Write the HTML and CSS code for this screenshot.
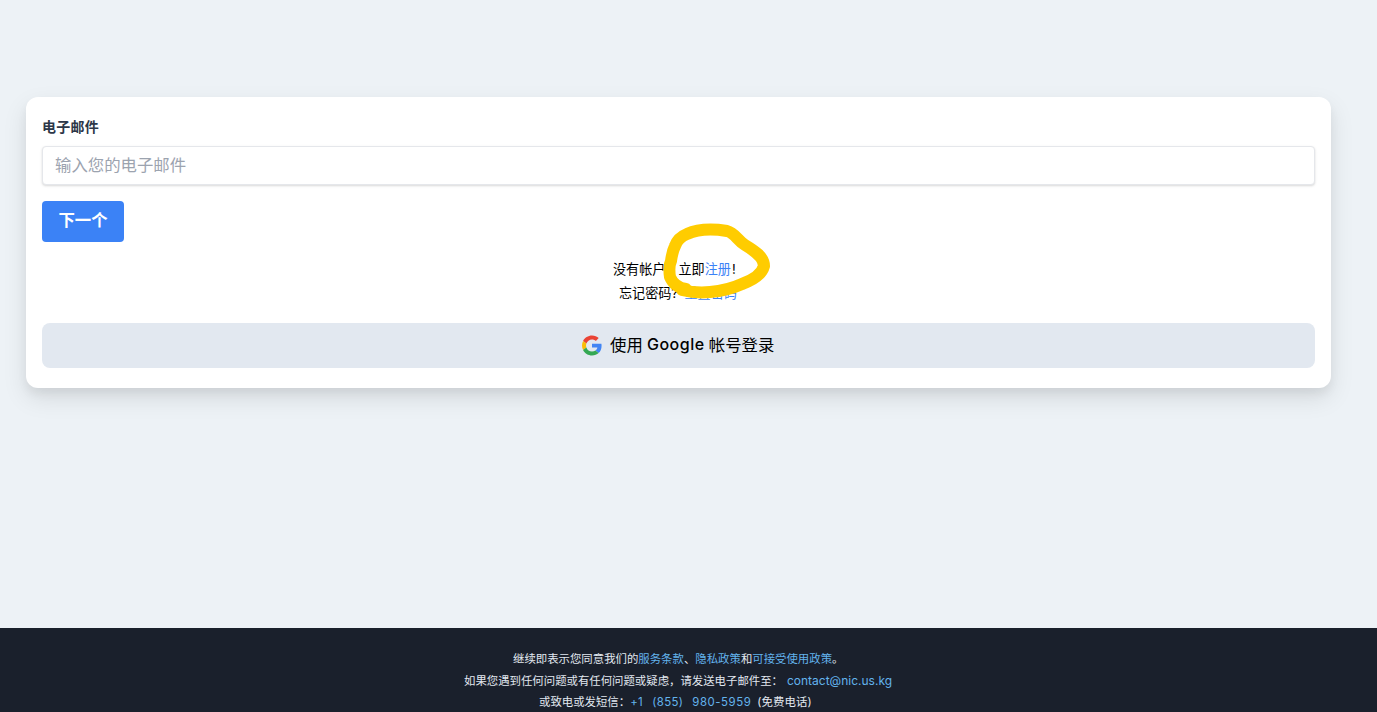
FILE: index.html
```html
<!DOCTYPE html>
<html lang="zh-CN">
<head>
<meta charset="utf-8">
<title>登录</title>
<link rel="stylesheet" href="styles.css">
</head>
<body>
<main class="main">
  <form class="card">
    <label class="label" for="email">电子邮件</label>
    <input class="input" id="email" type="email" placeholder="输入您的电子邮件">
    <button class="next" type="button">下一个</button>
    <div class="help">
      <p class="signup"><span class="ask">没有帐户?</span><span>立即<a href="#">注册</a></span><span class="mark">!</span></p>
      <p class="forgot"><span class="ask">忘记密码?</span><a href="#">重置密码</a></p>
      <svg class="scribble" width="120" height="90" viewBox="660 215 120 90" fill="none" stroke="#ffcc00" stroke-width="12" stroke-linecap="round" stroke-linejoin="round"><path d="M686 289C679 288 673 284 670 277C669 270 669 265 671 261C672 254 673 250 675 246C677 240 682 236 687 234C698 229 714 229 727 231C735 233 737 240 745 245C755 251 764 257 764 266C762 274 753 280 742 284C731 289 722 291 710 292C699 293 690 292 682 290"/></svg>
    </div>
    <button class="google" type="button">
      <svg class="logo" viewBox="0 0 48 48"><path fill="#EA4335" d="M24 9.5c3.54 0 6.71 1.22 9.21 3.6l6.85-6.85C35.9 2.38 30.47 0 24 0 14.62 0 6.51 5.38 2.56 13.22l7.98 6.19C12.43 13.72 17.74 9.5 24 9.5z"/><path fill="#4285F4" d="M46.98 24.55c0-1.57-.15-3.09-.38-4.55H24v9.02h12.94c-.58 2.96-2.26 5.48-4.78 7.18l7.73 6c4.51-4.18 7.09-10.36 7.09-17.65z"/><path fill="#FBBC05" d="M10.53 28.59c-.48-1.45-.76-2.99-.76-4.59s.27-3.14.76-4.59l-7.98-6.19C.92 16.46 0 20.12 0 24c0 3.88.92 7.54 2.56 10.78l7.97-6.19z"/><path fill="#34A853" d="M24 48c6.48 0 11.93-2.13 15.89-5.81l-7.73-6c-2.15 1.45-4.92 2.3-8.16 2.3-6.26 0-11.57-4.22-13.47-9.91l-7.98 6.19C6.51 42.62 14.62 48 24 48z"/></svg>
      <span class="cjk">使用</span><span class="brand">Google</span><span class="cjk">帐号登录</span>
    </button>
  </form>
</main>
<footer class="footer">
  <p class="terms">继续即表示您同意我们的<a href="#">服务条款</a>、<a href="#">隐私政策</a>和<a href="#">可接受使用政策</a>。</p>
  <p class="contact"><span>如果您遇到任何问题或有任何问题或疑虑，请发送电子邮件至：</span><a class="mail" href="#">contact@nic.us.kg</a></p>
  <p class="phone"><span>或致电或发短信：</span><a class="number" href="#"><span>+1</span><span>(855)</span><span class="line">980-5959</span></a><span class="free">(免费电话)</span></p>
</footer>
</body>
</html>
```
FILE: styles.css
```css
* { box-sizing: border-box; }
body {
  margin: 0;
  height: 712px;
  overflow: hidden;
  display: flex;
  flex-direction: column;
  background: #edf2f7;
  font-family: Inter, "Noto Sans CJK SC", sans-serif;
  color: #000;
}
p { margin: 0; }
a { color: #3b82f6; text-decoration: none; }
.main { height: 628px; flex: none; padding: 97px 46px 0 26px; background: #edf2f6; }
.card {
  display: flex;
  flex-direction: column;
  height: 291px;
  padding: 20px 16px;
  background: #fff;
  border-radius: 12px;
  box-shadow: 0 10px 25px rgba(0, 0, 0, .1), 0 6px 10px rgba(0, 0, 0, .05);
}
.label { height: 29px; line-height: 20px; font-size: 14px; font-weight: 700; letter-spacing: .25px; color: #2d3748; }
.input {
  height: 39px;
  flex: none;
  padding: 0 12px 4px;
  border: 1px solid #e5e7eb;
  border-radius: 4px;
  font: 16.4px "Noto Sans CJK SC", sans-serif;
  box-shadow: 0 1px 3px rgba(0, 0, 0, .1), 0 1px 2px rgba(0, 0, 0, .06);
}
.input::placeholder { color: #9ca3af; opacity: 1; }
.next {
  width: 82px;
  height: 41px;
  flex: none;
  margin-top: 16px;
  padding: 0 0 5px;
  border: 0;
  border-radius: 4px;
  background: #3b82f6;
  color: #fff;
  font: 700 16.4px "Noto Sans CJK SC", sans-serif;
}
.help { position: relative; height: 81px; padding-top: 15px; font-size: 13.1px; line-height: 24px; }
.help p { display: flex; }
.signup { padding-left: 571px; }
.forgot { padding-left: 577px; }
.ask { width: 65.5px; white-space: nowrap; }
.mark { padding-left: 1px; }
.scribble { position: absolute; left: 618px; top: -27px; }
.google {
  display: flex;
  align-items: center;
  height: 45px;
  flex: none;
  padding: 0 0 0 540px;
  border: 0;
  border-radius: 8px;
  background: #e2e8f0;
  color: #000;
  font-family: inherit;
  font-size: 16px;
  white-space: nowrap;
}
.logo { width: 20px; height: 21px; margin-right: 8px; flex: none; }
.cjk { padding-bottom: 4px; font-size: 16.4px; }
.brand { width: 60px; margin: 0 3px 3px; font-weight: 500; letter-spacing: .5px; }
.footer {
  flex: 1;
  padding-top: 21px;
  background: #1a202c;
  border-bottom: 1px solid #10151f;
  color: #e2e8f0;
  font-size: 11.4px;
  line-height: 21.5px;
}
.footer a { color: #63b3ed; }
.footer p { display: flex; white-space: nowrap; }
.terms { padding-left: 513px; }
.contact { padding-left: 464px; }
.phone { padding-left: 539px; }
.mail { margin-left: 4px; font-size: 12px; line-height: 20px; }
.number { display: flex; gap: 9px; margin-right: 6px; letter-spacing: .4px; }
.line { letter-spacing: .55px; }
.free { letter-spacing: .1px; }
```
